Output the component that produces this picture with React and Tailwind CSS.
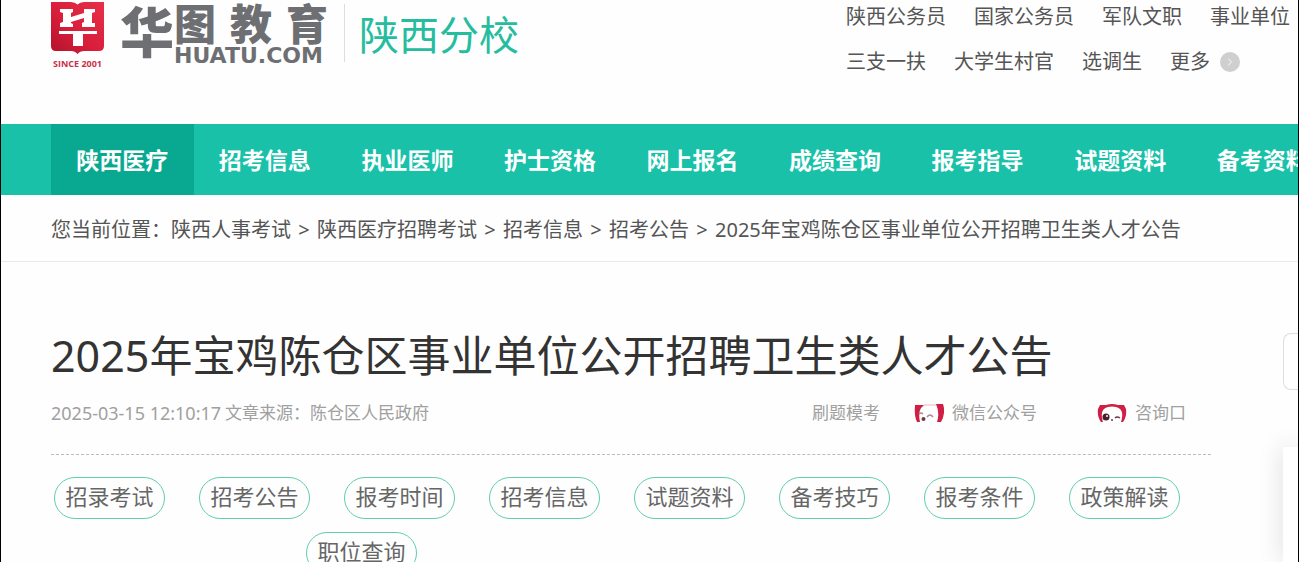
import React from 'react';
import { ChevronRight } from 'lucide-react';

const TOP_LINKS = [
    ["陕西公务员", "国家公务员", "军队文职", "事业单位"],
    ["三支一扶", "大学生村官", "选调生"],
];

const NAV_ITEMS = ["陕西医疗", "招考信息", "执业医师", "护士资格", "网上报名", "成绩查询", "报考指导", "试题资料", "备考资料"];

const CRUMBS = ["陕西人事考试", "陕西医疗招聘考试", "招考信息", "招考公告"];

const TITLE = "2025年宝鸡陈仓区事业单位公开招聘卫生类人才公告";

const TAGS = ["招录考试", "招考公告", "报考时间", "招考信息", "试题资料", "备考技巧", "报考条件", "政策解读"];

const ShieldMark = () => (
    <svg viewBox="0 0 53 52" className="w-[53px] h-[52px]" aria-hidden="true">
        <defs>
            <linearGradient id="shield" x1="0" y1="1" x2="1" y2="0">
                <stop offset="0" stopColor="#b3122b" />
                <stop offset="0.45" stopColor="#d81e3a" />
                <stop offset="1" stopColor="#e8304a" />
            </linearGradient>
        </defs>
        <path d="M0 0H20Q24 0 26.500 2.500Q29 0 33 0H53V44Q53 49 48 49H33Q29 49 26.500 52Q24 49 20 49H5Q0 49 0 44Z" fill="url(#shield)" />
        <path d="M9 7H22V10L20 11V15L33 11V7H44V10L41 11V21H44V25H31V21L33 20V16L20 20V21L22 22V25H9V21L12 20V11L9 10Z" fill="#fff" />
        <path d="M8 29H46V32H32V44H22V32H8Z" fill="#fff" />
    </svg>
);

const Panda = ({ wink }) => (
    <svg viewBox="0 0 30 18" className="w-[30px] h-[18px]" aria-hidden="true">
        {wink ? (
            <>
                <path d="M1 1H10L7 4Q4 9 6 18H3Q0 12 1 1Z" fill="#cf1f45" />
                <path d="M22 0H29Q32 9 27 18H23Q26 9 22 0Z" fill="#cf1f45" />
                <path d="M10 1H22" stroke="#eab4c0" strokeWidth="1" />
                <path d="M5 10Q7 8 9 10M13 13Q16 9 19 13" fill="none" stroke="#a58a92" strokeWidth="1.500" />
                <circle cx="9.500" cy="15" r="2" fill="#6b3b46" />
            </>
        ) : (
            <>
                <path d="M3 1H9Q15 -1 21 1H27L29 5Q30 13 26 18H4Q0 13 1 5Z" fill="#cf1f45" />
                <path d="M6 18Q2 5 11 3Q15 2 19 3Q28 5 24 18Z" fill="#fff" />
                <circle cx="9" cy="13" r="3.500" fill="#4a1f2a" />
                <circle cx="10" cy="12" r="1" fill="#fff" />
                <path d="M18 14Q20 12 23 14" fill="none" stroke="#6b3b46" strokeWidth="1.500" />
                <circle cx="15" cy="16" r="1" fill="#6b3b46" />
            </>
        )}
    </svg>
);

const Logo = () => (
    <a href="#" className="flex items-start text-[#6d6f72]">
        <span className="flex w-[53px] shrink-0 flex-col items-center">
            <ShieldMark />
            <span className="mt-1 whitespace-nowrap font-['Open_Sans'] text-[9px] leading-[12px] font-bold text-[#c9304a]">SINCE 2001</span>
        </span>
        <span className="ml-4 text-[54px] leading-[60px] font-black">华</span>
        <span className="flex w-[154px] flex-col">
            <span className="flex justify-between text-[42px] leading-[44px] font-black">
                <span>图</span>
                <span>教</span>
                <span>育</span>
            </span>
            <span className="font-['DejaVu_Sans'] text-[22px] leading-[20px] font-bold">HUATU.COM</span>
        </span>
    </a>
);

const Tag = ({ children }) => (
    <a href="#" className="flex h-[42px] w-[111px] items-center justify-center rounded-full border border-[#5fcfae] pb-1 text-[22px] whitespace-nowrap text-[#666]">
        {children}
    </a>
);

export default function App() {
    return (
        <div className="relative h-screen overflow-hidden border-x border-black bg-[#fefefe] font-['Noto_Sans','Noto_Sans_CJK_SC',sans-serif] text-[#333]">
            {/* Header */}
            <header className="flex h-[124px] justify-between pt-[2px] pl-[50px]">
                <div className="flex items-start">
                    <Logo />
                    <div className="mt-[2px] ml-4 flex h-[58px] items-center border-l border-[#ddd] pl-[14px] text-[40px] whitespace-nowrap text-[#26bd9f]">
                        <span className="pt-1">陕西分校</span>
                    </div>
                </div>
                <div className="flex w-[452px] shrink-0 flex-col gap-[15px] text-[20px] leading-[30px] whitespace-nowrap text-[#555]">
                    <div className="flex gap-7">
                        {TOP_LINKS[0].map((link) => <a key={link} href="#">{link}</a>)}
                    </div>
                    <div className="flex gap-7">
                        {TOP_LINKS[1].map((link) => <a key={link} href="#">{link}</a>)}
                        <a href="#" className="flex items-center gap-[10px]">
                            更多
                            <span className="flex size-5 items-center justify-center rounded-full bg-[#cfcfcf] text-white">
                                <ChevronRight className="size-3" />
                            </span>
                        </a>
                    </div>
                </div>
            </header>

            {/* Main nav */}
            <nav className="bg-[#1ac1a9] pl-[50px]">
                <ul className="grid w-[1283px] grid-cols-9 text-[23px] font-bold text-white">
                    {NAV_ITEMS.map((item, idx) => (
                        <li key={item}>
                            <a href="#" className={`block pt-[2px] text-center leading-[69px] whitespace-nowrap ${idx === 0 ? 'bg-[#09a991]' : ''}`}>{item}</a>
                        </li>
                    ))}
                </ul>
            </nav>

            {/* Breadcrumb */}
            <div className="flex h-[67px] items-center border-b border-[#eaeaea] pt-[3px] pl-[50px] text-[20px] whitespace-nowrap text-[#555]">
                <span>您当前位置：</span>
                {CRUMBS.map((crumb) => (
                    <React.Fragment key={crumb}>
                        <a href="#">{crumb}</a>
                        <span className="w-[26px] text-center">&gt;</span>
                    </React.Fragment>
                ))}
                <span>{TITLE}</span>
            </div>

            <main className="mr-[87px] ml-[50px] pt-[64px]">
                <h1 className="text-[43px] leading-[60px] whitespace-nowrap">{TITLE}</h1>

                <div className="flex h-[69px] items-start justify-between border-b border-dashed border-[#bbb] pt-[14px] text-[17px] leading-[26px] whitespace-nowrap text-[#a0a0a0]">
                    <p className="flex gap-1">
                        <time className="text-[18px]">2025-03-15 12:10:17</time>
                        <span>文章来源：陈仓区人民政府</span>
                    </p>
                    <div className="flex pr-[25px]">
                        <a href="#">刷题模考</a>
                        <a href="#" className="ml-[34px] flex items-center gap-2"><Panda wink />微信公众号</a>
                        <a href="#" className="ml-[60px] flex items-center gap-2"><Panda />咨询口</a>
                    </div>
                </div>

                {/* Tags */}
                <ul className="grid grid-cols-8 pt-[22px]">
                    {TAGS.map((tag) => <li key={tag} className="pl-[3px]"><Tag>{tag}</Tag></li>)}
                </ul>
                <div className="mt-[13px] pl-[255px]">
                    <Tag>职位查询</Tag>
                </div>
            </main>

            {/* Side widgets */}
            <div className="absolute top-[333px] right-0 h-[57px] w-[15px] rounded-l-lg border border-r-0 border-[#ddd] bg-white" />
            <div className="absolute top-[447px] right-0 bottom-0 w-[15px] bg-white shadow-[0_0_24px_rgba(0,0,0,0.15)]" />
        </div>
    );
}
